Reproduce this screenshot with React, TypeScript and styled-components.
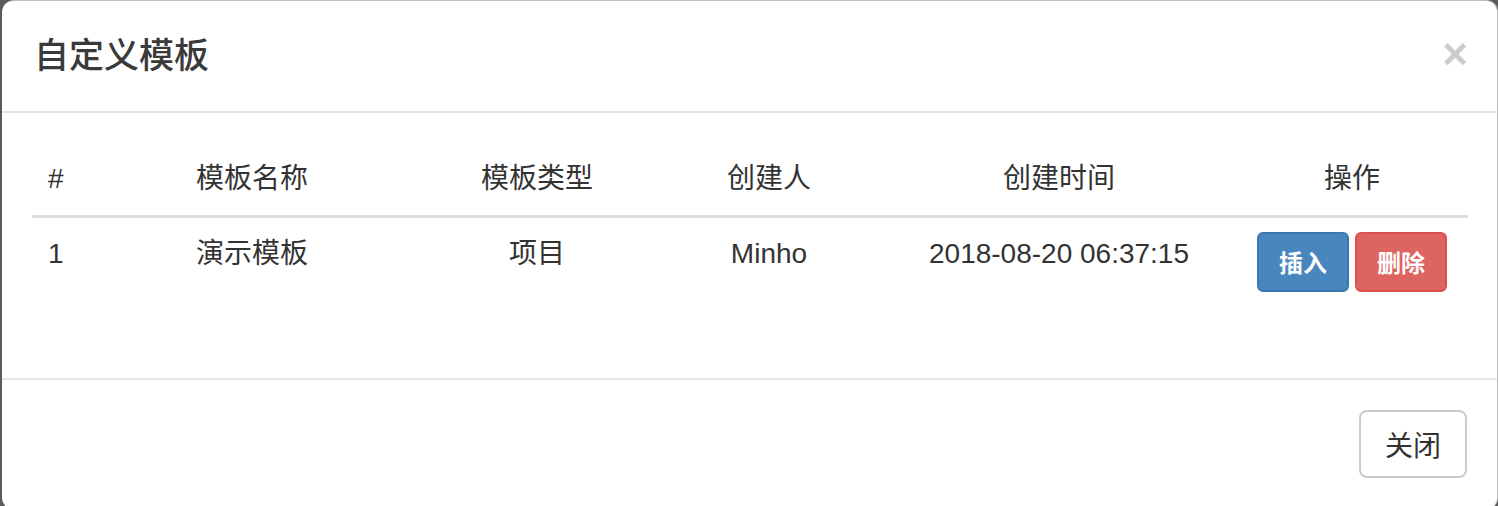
import React from "react";
import styled, { createGlobalStyle } from "styled-components";

const GlobalStyle = createGlobalStyle`
  html, body {
    margin: 0;
    padding: 0;
    width: 1498px;
    height: 506px;
    overflow: hidden;
    background: #5b5b5b;
  }
  * {
    box-sizing: border-box;
  }
`

const Backdrop = styled.div`
  width: 1498px;
  height: 506px;
  padding-left: 2px;
  overflow: hidden;
  font-family: "Liberation Sans", "Noto Sans CJK SC", sans-serif;
  color: #333333;
`
const Modal = styled.div`
  width: 1496px;
  height: 510px;
  background: #ffffff;
  border: 1px solid rgba(0, 0, 0, 0.25);
  border-left: 0;
  border-radius: 12px;
  overflow: hidden;
`
const Header = styled.div`
  display: flex;
  align-items: center;
  justify-content: space-between;
  padding: 30px 29px 30px 32px;
  border-bottom: 2px solid #e5e5e5;
`
const Title = styled.h4`
  margin: 0;
  font-size: 35px;
  line-height: 50px;
  font-weight: 500;
  color: #3a3a3a;
`
const CloseX = styled.button`
  padding: 0;
  margin: -4px 0 0;
  border: 0;
  background: transparent;
  font-family: "Liberation Sans", sans-serif;
  font-size: 44px;
  line-height: 1;
  font-weight: bold;
  color: #000000;
  opacity: 0.2;
  cursor: pointer;
`
const Body = styled.div`
  padding: 30px;
`
const Table = styled.table`
  width: 1436px;
  table-layout: fixed;
  border-collapse: collapse;
  margin-bottom: 40px;
  font-size: 28px;
`
const Th = styled.th<{ $align?: string }>`
  padding: 16px;
  line-height: 40px;
  font-weight: normal;
  text-align: ${p => p.$align || "center"};
  border-bottom: 3px solid #dddddd;
`
const Td = styled.td<{ $align?: string }>`
  padding: 16px;
  line-height: 40px;
  text-align: ${p => p.$align || "center"};
  vertical-align: top;
  white-space: nowrap;
`
const ActionCell = styled.div`
  display: flex;
  justify-content: center;
  gap: 6px;
`
const SmallButton = styled.button<{ $variant: "primary" | "danger" }>`
  height: 60px;
  padding: 0 20px;
  margin-top: -2px;
  font-family: "Noto Sans CJK SC", sans-serif;
  font-size: 24px;
  font-weight: 700;
  line-height: 36px;
  color: #ffffff;
  border-radius: 6px;
  border: 2px solid ${p => (p.$variant === "primary" ? "#3b78ae" : "#d9524f")};
  background: ${p => (p.$variant === "primary" ? "#4887be" : "#de6461")};
`
const Footer = styled.div`
  display: flex;
  justify-content: flex-end;
  padding: 30px;
  border-top: 2px solid #e5e5e5;
`
const DefaultButton = styled.button`
  height: 68px;
  padding: 0 24px;
  font-family: "Noto Sans CJK SC", sans-serif;
  font-size: 28px;
  color: #333333;
  background: #ffffff;
  border: 2px solid #cccccc;
  border-radius: 8px;
`

const columns = [
  { label: "#", width: 148, align: "left" },
  { label: "模板名称", width: 238, align: "left" },
  { label: "模板类型", width: 238, align: "center" },
  { label: "创建人", width: 226, align: "center" },
  { label: "创建时间", width: 354, align: "center" },
  { label: "操作", width: 232, align: "center" },
]

const rows = [
  { id: 1, name: "演示模板", type: "项目", creator: "Minho", created: "2018-08-20 06:37:15" },
]

const App = () => {
  return (
    <>
      <GlobalStyle />
      <Backdrop>
        <Modal>
          <Header>
            <Title>自定义模板</Title>
            <CloseX>×</CloseX>
          </Header>
          <Body>
            <Table>
              <colgroup>
                {columns.map((c, i) => <col key={i} style={{ width: c.width }} />)}
              </colgroup>
              <thead>
                <tr>
                  {columns.map((c, i) => <Th key={i} $align={c.align}>{c.label}</Th>)}
                </tr>
              </thead>
              <tbody>
                {rows.map(r => (
                  <tr key={r.id}>
                    <Td $align="left">{r.id}</Td>
                    <Td $align="left">{r.name}</Td>
                    <Td>{r.type}</Td>
                    <Td>{r.creator}</Td>
                    <Td>{r.created}</Td>
                    <Td>
                      <ActionCell>
                        <SmallButton $variant="primary">插入</SmallButton>
                        <SmallButton $variant="danger">删除</SmallButton>
                      </ActionCell>
                    </Td>
                  </tr>
                ))}
              </tbody>
            </Table>
          </Body>
          <Footer>
            <DefaultButton>关闭</DefaultButton>
          </Footer>
        </Modal>
      </Backdrop>
    </>
  );
}

export default App;
